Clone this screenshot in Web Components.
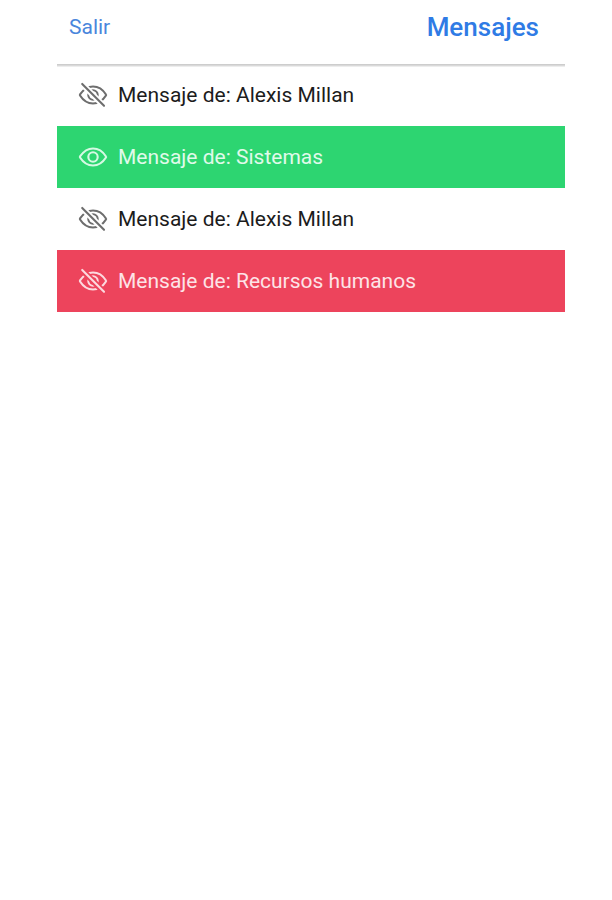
<!DOCTYPE html>
<html lang="es">
<head>
  <meta charset="utf-8">
  <meta name="viewport" content="width=device-width, initial-scale=1">
  <title>Mensajes</title>
  <style>
    body {
      margin: 0;
      background: #fff;
      font-family: Roboto, "Liberation Sans", sans-serif;
    }
  </style>
</head>
<body>
  <message-page>
    <page-header slot="header">
      <span slot="action">Salir</span>
      Mensajes
    </page-header>
    <message-item sender="Alexis Millan"></message-item>
    <message-item sender="Sistemas" color="success" seen></message-item>
    <message-item sender="Alexis Millan"></message-item>
    <message-item sender="Recursos humanos" color="danger"></message-item>
  </message-page>

  <script>
    class MessagePage extends HTMLElement {
      constructor() {
        super();
        this.attachShadow({ mode: 'open' });
        this.shadowRoot.innerHTML = `
          <style>
            :host {
              display: block;
              padding: 0 47px 0 57px;
            }
            main {
              display: flex;
              flex-direction: column;
            }
          </style>
          <slot name="header"></slot>
          <main><slot></slot></main>
        `;
      }
    }

    class PageHeader extends HTMLElement {
      constructor() {
        super();
        this.attachShadow({ mode: 'open' });
        this.shadowRoot.innerHTML = `
          <style>
            :host {
              display: block;
            }
            header {
              display: flex;
              align-items: center;
              justify-content: space-between;
              padding: 11px 26px 21px 12px;
              box-shadow: 0 1px #cdcdcd, 0 2px #d9d9d9, 0 3px #ededed;
            }
            button {
              padding: 0;
              border: 0;
              background: none;
              color: #4a86dc;
              font: inherit;
              font-size: 21px;
              line-height: 24px;
              cursor: pointer;
            }
            h1 {
              margin: 0;
              color: #2f7be5;
              font-size: 26px;
              font-weight: 500;
              line-height: 32px;
            }
          </style>
          <header>
            <button type="button"><slot name="action"></slot></button>
            <h1><slot></slot></h1>
          </header>
        `;
      }
    }

    class EyeIcon extends HTMLElement {
      static get observedAttributes() {
        return ['off'];
      }

      constructor() {
        super();
        this.attachShadow({ mode: 'open' });
        this.render();
      }

      attributeChangedCallback() {
        this.render();
      }

      render() {
        const eye = `
          <path d="M256 112c-78 0-158 45-221 135a16 16 0 000 18C83 341 162 400 256 400c93 0 173-59 221-135a16 16 0 000-18C429 172 348 112 256 112z"/>
          <circle cx="256" cy="256" r="80"/>
        `;
        // the mask keeps a clear band around the slash
        const off = `
          <mask id="band" maskUnits="userSpaceOnUse" x="0" y="0" width="512" height="512">
            <rect width="512" height="512" fill="#fff" stroke="none"/>
            <path d="M40 40L472 472" stroke="#000" stroke-width="100"/>
          </mask>
          <g mask="url(#band)">${eye}</g>
          <path d="M72 68L444 440"/>
        `;

        this.shadowRoot.innerHTML = `
          <style>
            :host {
              display: block;
              flex: none;
              width: 30px;
              height: 30px;
            }
            svg {
              display: block;
              width: 100%;
              height: 100%;
              fill: none;
              stroke: currentColor;
              stroke-width: 36px;
              stroke-linecap: round;
              stroke-linejoin: round;
            }
            mask path {
              stroke-width: 100px;
            }
          </style>
          <svg viewBox="0 0 512 512" aria-hidden="true">${this.hasAttribute('off') ? off : eye}</svg>
        `;
      }
    }

    class MessageItem extends HTMLElement {
      static get observedAttributes() {
        return ['sender', 'seen'];
      }

      constructor() {
        super();
        this.attachShadow({ mode: 'open' });
        this.render();
      }

      attributeChangedCallback() {
        this.render();
      }

      render() {
        const sender = this.getAttribute('sender') || '';
        const off = this.hasAttribute('seen') ? '' : 'off';

        this.shadowRoot.innerHTML = `
          <style>
            :host {
              display: block;
              --icon: #6e6e6e;
              color: #1c1c1c;
            }
            :host([color="success"]) {
              --icon: #d5f9e3;
              background: #2dd571;
              color: #e0faea;
            }
            :host([color="danger"]) {
              --icon: #fcd9de;
              background: #ed445c;
              color: #fde3e7;
            }
            button {
              display: flex;
              align-items: center;
              gap: 10px;
              width: 100%;
              min-height: 62px;
              padding: 0 21px;
              border: 0;
              background: none;
              color: inherit;
              font: inherit;
              font-size: 21px;
              line-height: 24px;
              text-align: left;
              cursor: pointer;
            }
            eye-icon {
              color: var(--icon);
            }
          </style>
          <button type="button">
            <eye-icon ${off}></eye-icon>
            <span>Mensaje de: ${sender}</span>
          </button>
        `;
      }
    }

    customElements.define('message-page', MessagePage);
    customElements.define('page-header', PageHeader);
    customElements.define('eye-icon', EyeIcon);
    customElements.define('message-item', MessageItem);
  </script>
</body>
</html>
